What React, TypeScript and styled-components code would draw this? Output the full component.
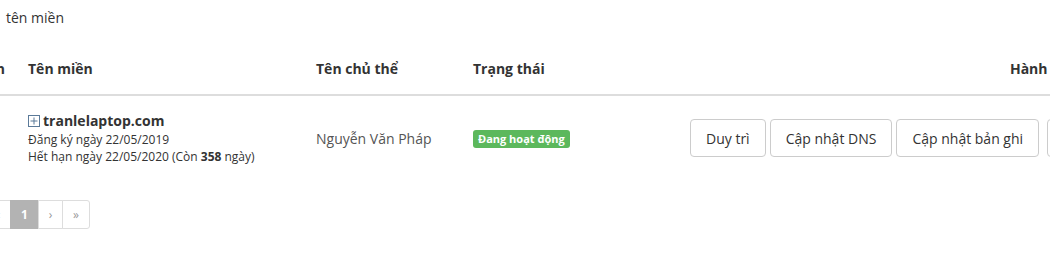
import styled, { createGlobalStyle } from 'styled-components';

const GlobalStyle = createGlobalStyle`
    html, body {
        margin: 0;
        padding: 0;
        background: #fff;
        overflow: hidden;
    }
    body {
        font-family: 'Open Sans', 'Noto Sans', sans-serif;
        color: #333;
    }
`;

const Page = styled.div`
    width: 1050px;
    height: 273px;
    overflow: hidden;
    padding-top: 8px;
    box-sizing: border-box;
`;

const Caption = styled.div`
    font-size: 14px;
    line-height: 20px;
    padding-left: 6px;
    color: #333;
`;

const Table = styled.table`
    margin-top: 16px;
    margin-left: -40px;
    border-collapse: collapse;
    table-layout: fixed;
    width: 1454px;
`;

const Th = styled.th<{ $align?: string; $padRight?: number }>`
    text-align: ${({ $align }) => $align || 'left'};
    font-size: 14px;
    font-weight: 700;
    line-height: 20px;
    padding: 15px ${({ $padRight }) => $padRight ?? 8}px 15px 8px;
    color: #333;
    border-bottom: 2px solid #ddd;
    white-space: nowrap;
`;

const Td = styled.td`
    padding: 15px 8px;
    vertical-align: middle;
    font-size: 14px;
    color: #555;
`;

const DomainName = styled.div`
    display: flex;
    align-items: center;
    gap: 3px;
    font-size: 14px;
    font-weight: 700;
    line-height: 20px;
    color: #333;
`;

const PlusIcon = styled.svg`
    flex: none;
    width: 12px;
    height: 12px;
`;

const Meta = styled.div`
    font-size: 12px;
    line-height: 17px;
    color: #333;
`;

const Badge = styled.span`
    display: inline-block;
    background: #5cb85c;
    color: #fff;
    font-size: 11px;
    font-weight: 700;
    line-height: 14px;
    padding: 2px 5px;
    border-radius: 3px;
`;

const Actions = styled.div`
    display: flex;
    gap: 4px;
`;

const Button = styled.button<{ $spaced?: boolean }>`
    height: 38px;
    padding: 0 15px;
    margin-left: ${({ $spaced }) => ($spaced ? '4px' : '0')};
    background: #fff;
    border: 1px solid #ccc;
    border-radius: 4px;
    font-family: inherit;
    font-size: 14px;
    color: #333;
    white-space: nowrap;
`;

const Pager = styled.ul`
    display: flex;
    list-style: none;
    margin: 20px 0 0 -39px;
    padding: 0;
`;

const PageItem = styled.li<{ $active?: boolean; $w: number }>`
    width: ${({ $w }) => $w}px;
    height: 29px;
    box-sizing: border-box;
    display: flex;
    align-items: center;
    justify-content: center;
    font-size: 12px;
    border: 1px solid ${({ $active }) => ($active ? '#b3b3b3' : '#ddd')};
    margin-left: -1px;
    background: ${({ $active }) => ($active ? '#b3b3b3' : '#fff')};
    color: ${({ $active }) => ($active ? '#fff' : '#999')};
    font-weight: ${({ $active }) => ($active ? 700 : 400)};
    &:last-child {
        border-radius: 0 3px 3px 0;
    }
`;

const App = () => {
    return (
        <Page>
            <GlobalStyle />
            <Caption>tên miền</Caption>
            <Table>
                <colgroup>
                    <col style={{ width: 60 }} />
                    <col style={{ width: 288 }} />
                    <col style={{ width: 157 }} />
                    <col style={{ width: 217 }} />
                    <col style={{ width: 732 }} />
                </colgroup>
                <thead>
                    <tr>
                        <Th $align="right" $padRight={15}>
                            Chọn
                        </Th>
                        <Th>Tên miền</Th>
                        <Th>Tên chủ thể</Th>
                        <Th>Trạng thái</Th>
                        <Th $align="center">Hành động</Th>
                    </tr>
                </thead>
                <tbody>
                    <tr>
                        <Td></Td>
                        <Td>
                            <DomainName>
                                <PlusIcon viewBox="0 0 12 12">
                                    <rect x="0.5" y="0.5" width="11" height="11" fill="none" stroke="#5b7a99" />
                                    <path d="M6 2.5v7M2.5 6h7" stroke="#5b7a99" strokeWidth="1" />
                                </PlusIcon>
                                tranlelaptop.com
                            </DomainName>
                            <Meta>Đăng ký ngày 22/05/2019</Meta>
                            <Meta>
                                Hết hạn ngày 22/05/2020 (Còn <b>358</b> ngày)
                            </Meta>
                        </Td>
                        <Td>Nguyễn Văn Pháp</Td>
                        <Td>
                            <Badge>Đang hoạt động</Badge>
                        </Td>
                        <Td>
                            <Actions>
                                <Button>Duy trì</Button>
                                <Button>Cập nhật DNS</Button>
                                <Button>Cập nhật bản ghi</Button>
                                <Button $spaced>Chuyển đổi</Button>
                            </Actions>
                        </Td>
                    </tr>
                </tbody>
            </Table>
            <Pager>
                <PageItem $w={27}>«</PageItem>
                <PageItem $w={25}>‹</PageItem>
                <PageItem $w={29} $active>
                    1
                </PageItem>
                <PageItem $w={25}>›</PageItem>
                <PageItem $w={28}>»</PageItem>
            </Pager>
        </Page>
    );
};

export default App;
